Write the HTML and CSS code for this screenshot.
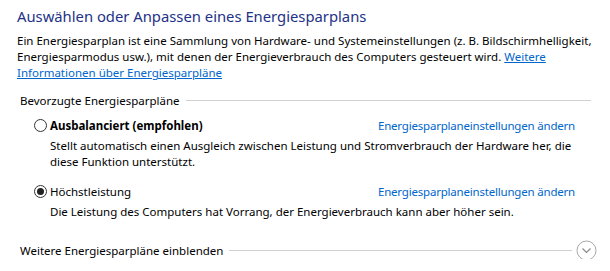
FILE: index.html
```html
<!DOCTYPE html>
<html lang="de">
<head>
<meta charset="utf-8">
<link rel="stylesheet" href="styles.css">
</head>
<body>
<div class="page">
  <h1 class="title">Auswählen oder Anpassen eines Energiesparplans</h1>
  <p class="intro">Ein Energiesparplan ist eine Sammlung von Hardware- und Systemeinstellungen (z. B. Bildschirmhelligkeit, Energiesparmodus usw.), mit denen der Energieverbrauch des Computers gesteuert wird. <a class="link" href="#">Weitere Informationen über Energiesparpläne</a></p>

  <div class="group-head"><span class="group-label">Bevorzugte Energiesparpläne</span><span class="rule"></span></div>

  <div class="plan">
    <div class="plan-row">
      <span class="radio"></span>
      <span class="plan-name bold">Ausbalanciert (empfohlen)</span>
      <a class="link-plain" href="#">Energiesparplaneinstellungen ändern</a>
    </div>
    <p class="plan-desc">Stellt automatisch einen Ausgleich zwischen Leistung und Stromverbrauch der Hardware her, die diese Funktion unterstützt.</p>
  </div>

  <div class="plan">
    <div class="plan-row">
      <span class="radio checked"></span>
      <span class="plan-name">Höchstleistung</span>
      <a class="link-plain" href="#">Energiesparplaneinstellungen ändern</a>
    </div>
    <p class="plan-desc">Die Leistung des Computers hat Vorrang, der Energieverbrauch kann aber höher sein.</p>
  </div>

  <div class="group-head more"><span class="group-label">Weitere Energiesparpläne einblenden</span><span class="rule"></span>
    <svg class="chev" width="21" height="21" viewBox="0 0 21 21"><circle cx="10.5" cy="10.5" r="9.5" fill="none" stroke="#a8a8a8" stroke-width="1"/><path d="M6.5 8.5 L10.5 12.5 L14.5 8.5" fill="none" stroke="#8a8a8a" stroke-width="1.2"/></svg>
  </div>
</div>
</body>
</html>
```
FILE: styles.css
```css
html, body { margin: 0; padding: 0; background: #fff; }
body {
  font-family: "Noto Sans", "Open Sans", sans-serif;
  font-size: 11.5px;
  color: #000;
}
.page { width: 610px; padding: 4px 0 0 17px; box-sizing: border-box; }
.title {
  margin: 0;
  font-size: 14.8px;
  font-weight: normal;
  color: #1e3287;
  line-height: 24px;
}
.intro {
  margin: 5px 12px 0 0;
  line-height: 16.2px;
}
.link { color: #0066cc; text-decoration: underline; }
.link-plain { color: #0066cc; text-decoration: none; margin-left: auto; letter-spacing: -0.2px; }
.group-head {
  display: flex;
  align-items: center;
  margin: 11px 19px 0 3px;
  height: 16px;
}
.group-label { white-space: nowrap; }
.rule { flex: 1; height: 1px; background: #d0d0d0; margin-left: 6px; }
.plan { padding: 0 35px 0 17px; }
.plan-row { display: flex; align-items: center; height: 16px; margin-top: 9px; }
.radio {
  border: 1px solid #333; border-radius: 50%;
  box-sizing: border-box; margin-right: 3px; position: relative; flex: none;
  width: 13px; height: 13px;
}
.radio.checked::after {
  content: ""; position: absolute; left: 2px; top: 2px; width: 7px; height: 7px;
  border-radius: 50%; background: #222;
}
.bold { font-weight: bold; }
.plan-desc { margin: 4px 0 0 16px; line-height: 16px; }
.plan + .plan .plan-row { margin-top: 14px; }
.more { margin-top: 23px; margin-right: 13px; }
.more .rule { margin-right: 4px; }
.chev { flex: none; }
```
